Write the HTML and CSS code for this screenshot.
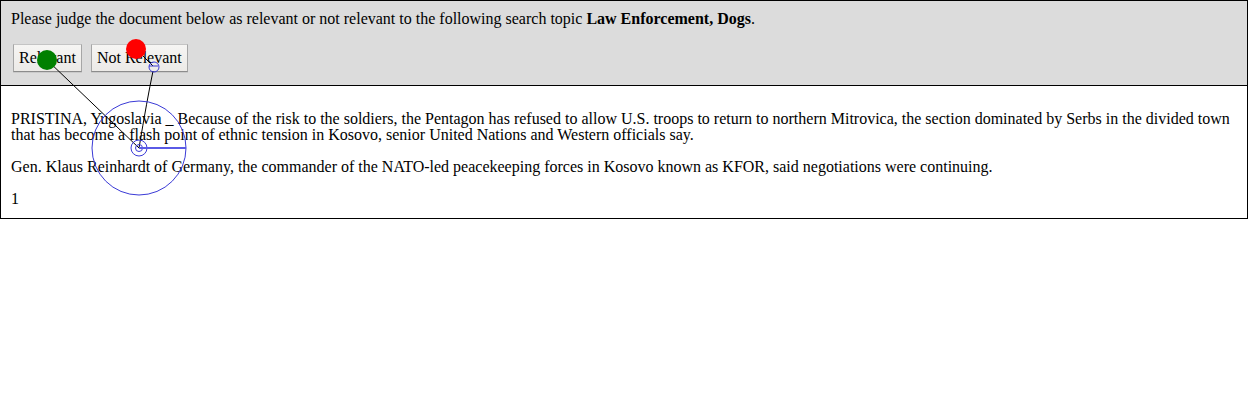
FILE: index.html
```html
<!DOCTYPE html>
<html>
<head>
<meta charset="utf-8">
<link rel="stylesheet" href="styles.css">
</head>
<body>
<div class="frame">
  <div class="header">
    <p class="prompt">Please judge the document below as relevant or not relevant to the following search topic <b>Law Enforcement, Dogs</b>.</p>
    <div class="buttons">
      <button class="btn">Relevant</button>
      <button class="btn">Not Relevant</button>
    </div>
  </div>
  <div class="doc">
    <p>PRISTINA, Yugoslavia _ Because of the risk to the soldiers, the Pentagon has refused to allow U.S. troops to return to northern Mitrovica, the section dominated by Serbs in the divided town that has become a flash point of ethnic tension in Kosovo, senior United Nations and Western officials say.</p>
    <p>Gen. Klaus Reinhardt of Germany, the commander of the NATO-led peacekeeping forces in Kosovo known as KFOR, said negotiations were continuing.</p>
    <p>1</p>
  </div>
</div>
<svg class="overlay" width="1249" height="400" viewBox="0 0 1249 400">
  <line x1="47" y1="60" x2="139" y2="148" stroke="#000" stroke-width="1"/>
  <line x1="136" y1="49" x2="153" y2="66" stroke="#000" stroke-width="1"/>
  <path d="M153 71 Q147 100 139 148" fill="none" stroke="#000" stroke-width="1"/>
  <circle cx="139" cy="148" r="47" fill="none" stroke="#3a3ad6" stroke-width="1"/>
  <circle cx="139" cy="148" r="8" fill="none" stroke="#3a3ad6" stroke-width="1"/>
  <circle cx="139" cy="148" r="3.5" fill="none" stroke="#3a3ad6" stroke-width="1"/>
  <line x1="139" y1="148" x2="186" y2="148" stroke="#5a5ae6" stroke-width="2"/>
  <circle cx="154" cy="67" r="5" fill="none" stroke="#3a3ad6" stroke-width="1"/>
  <line x1="149" y1="66" x2="158" y2="66" stroke="#3a3ad6" stroke-width="1"/>
  <circle cx="47" cy="60" r="10" fill="#008000"/>
  <circle cx="136" cy="49" r="10" fill="#ff0000"/>
</svg>
</body>
</html>
```
FILE: styles.css
```css
html, body {
  margin: 0;
  padding: 0;
  background: #fff;
}
body {
  font-family: "Liberation Serif", "Times New Roman", serif;
  font-size: 16px;
  line-height: 16px;
  color: #000;
  position: relative;
}
.frame {
  width: 1248px;
  box-sizing: border-box;
  border: 1px solid #000;
}
.header {
  background: #dcdcdc;
  border-bottom: 1px solid #000;
  padding: 10px 10px 13px 10px;
}
.prompt {
  margin: 0;
}
.buttons {
  display: flex;
  gap: 9px;
  margin-top: 17px;
  padding-left: 2px;
}
.btn {
  font-family: "Liberation Serif", "Times New Roman", serif;
  font-size: 16px;
  height: 28px;
  padding: 0 5px;
  margin: 0;
  color: #000;
  background: linear-gradient(#f6f5f3, #eceae7);
  border: 1px solid;
  border-color: #c4c4c4 #a6a6a6 #8c8c8c #a6a6a6;
  border-radius: 0;
  box-shadow: 0 1px 0 rgba(0,0,0,0.08);
}
.doc {
  padding: 25px 10px 11px 10px;
}
.doc p {
  margin: 0 0 16px 0;
}
.doc p:last-child {
  margin-bottom: 0;
}
.overlay {
  position: absolute;
  left: 0;
  top: 0;
  pointer-events: none;
}
```
